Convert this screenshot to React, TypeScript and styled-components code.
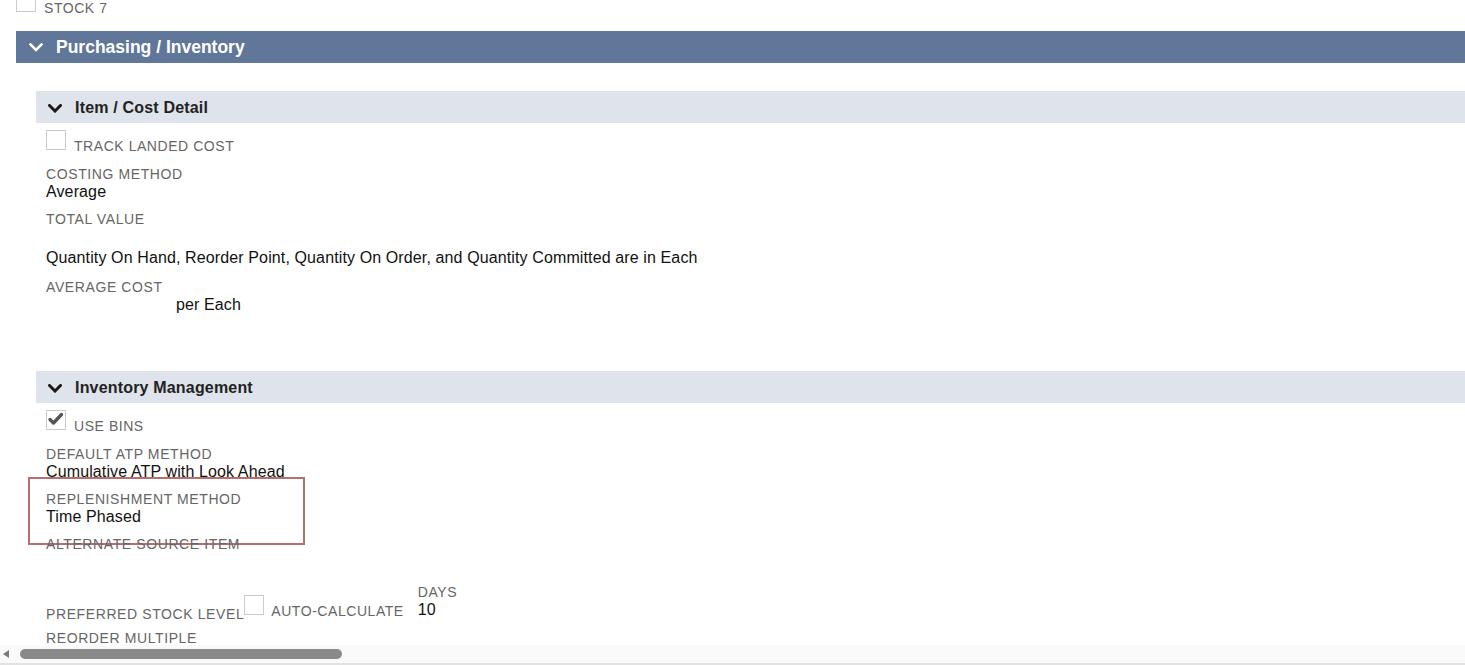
import React from 'react';
import styled, { createGlobalStyle } from 'styled-components';

const GlobalStyle = createGlobalStyle`
  html, body {
    margin: 0;
    padding: 0;
    background: #ffffff;
    overflow: hidden;
  }
  body {
    font-family: "Liberation Sans", Arial, sans-serif;
  }
`;

const Page = styled.div`
  padding-left: 16px;
  margin-top: -8px;
`;

const CheckRow = styled.div<{ $gap?: number }>`
  display: flex;
  align-items: flex-end;
  gap: ${p => p.$gap ?? 8}px;
`;

const Box = styled.div`
  width: 20px;
  height: 20px;
  box-sizing: border-box;
  border: 1px solid #cbcbcb;
  background: #fff;
  display: flex;
  align-items: center;
  justify-content: center;
  flex-shrink: 0;
`;

const CheckText = styled.span`
  font-size: 14px;
  line-height: 14px;
  letter-spacing: 0.55px;
  color: #666;
  margin-bottom: -3px;
  white-space: nowrap;
`;

const MainHeader = styled.div`
  display: flex;
  align-items: center;
  gap: 13px;
  height: 32px;
  margin-top: 19px;
  padding-left: 13px;
  background: #607799;
  color: #ffffff;
  font-size: 17.5px;
  font-weight: bold;
`;

const Section = styled.div`
  padding-left: 20px;
  padding-bottom: 19px;
  margin-top: 28px;
`;

const SubHeader = styled.div`
  display: flex;
  align-items: center;
  gap: 13px;
  height: 32px;
  box-sizing: border-box;
  padding: 2px 0 0 12px;
  background: #dfe3eb;
  color: #222;
  font-size: 16px;
  font-weight: bold;
  letter-spacing: 0.18px;
`;

const SectionBody = styled.div`
  padding: 7px 0 0 10px;
`;

const Fields = styled.div`
  margin-top: 16px;
`;

const Field = styled.div<{ $gap?: number }>`
  position: relative;
  margin-bottom: ${p => p.$gap ?? 10}px;
`;

const Label = styled.div`
  font-size: 14px;
  line-height: 17px;
  letter-spacing: 0.6px;
  color: #666;
  white-space: nowrap;
`;

const Value = styled.div<{ $indent?: number; $empty?: boolean }>`
  font-size: 16px;
  line-height: 18px;
  letter-spacing: 0.12px;
  color: #111;
  padding-left: ${p => p.$indent ?? 0}px;
  height: ${p => (p.$empty ? '11px' : 'auto')};
  white-space: nowrap;
`;

const Note = styled.div`
  font-size: 16px;
  line-height: 18px;
  letter-spacing: 0.12px;
  color: #111;
  margin-bottom: 12px;
`;

const Highlight = styled.div`
  position: absolute;
  top: -14px;
  left: -18px;
  width: 277px;
  height: 68px;
  box-sizing: border-box;
  border: 2px solid #b66f6f;
  pointer-events: none;
`;

const InlineRow = styled.div`
  display: flex;
  align-items: flex-end;
  margin-top: 20px;
  margin-bottom: 7px;
`;

const InlineCheck = styled(CheckRow)`
  margin-bottom: 8px;
`;

const DaysField = styled.div`
  margin-left: 14px;
  margin-bottom: 4px;
`;

const HScroll = styled.div`
  position: fixed;
  left: 0;
  right: 0;
  bottom: 0;
  height: 20px;
  box-sizing: border-box;
  background: #fafafa;
  border-bottom: 2px solid #e2e2e2;
  display: flex;
  align-items: center;
`;

const ScrollArrow = styled.div`
  width: 0;
  height: 0;
  margin-left: 3px;
  border-top: 4.5px solid transparent;
  border-bottom: 4.5px solid transparent;
  border-right: 6px solid #7a7a7a;
`;

const ScrollThumb = styled.div`
  margin-left: 11px;
  width: 322px;
  height: 10px;
  border-radius: 5px;
  background: #8a8a8a;
`;

const Chevron = ({ color, weight }: { color: string; weight: number }) => (
  <svg width="14" height="9" viewBox="0 0 14 9">
    <polyline
      points="1.5,1.5 7,7 12.5,1.5"
      fill="none"
      stroke={color}
      strokeWidth={weight}
      strokeLinecap="square"
    />
  </svg>
);

const Tick = () => (
  <svg width="18" height="18" viewBox="0 0 18 18">
    <polyline
      points="3,8.5 6.5,12 14.5,3.5"
      fill="none"
      stroke="#555"
      strokeWidth="3.4"
      strokeLinecap="round"
      strokeLinejoin="round"
    />
  </svg>
);

const Checkbox = ({ checked }: { checked?: boolean }) => <Box>{checked && <Tick />}</Box>;

export default function App() {
  return (
    <>
      <GlobalStyle />
      <Page>
        <CheckRow>
          <Checkbox />
          <CheckText>STOCK 7</CheckText>
        </CheckRow>

        <MainHeader>
          <Chevron color="#ffffff" weight={2.5} />
          Purchasing / Inventory
        </MainHeader>

        <Section>
          <SubHeader>
            <Chevron color="#1a1a1a" weight={3} />
            Item / Cost Detail
          </SubHeader>
          <SectionBody>
            <CheckRow>
              <Checkbox />
              <CheckText>TRACK LANDED COST</CheckText>
            </CheckRow>
            <Fields>
              <Field>
                <Label>COSTING METHOD</Label>
                <Value>Average</Value>
              </Field>
              <Field>
                <Label>TOTAL VALUE</Label>
                <Value $empty />
              </Field>
              <Note>
                Quantity On Hand, Reorder Point, Quantity On Order, and Quantity Committed are in Each
              </Note>
              <Field>
                <Label>AVERAGE COST</Label>
                <Value $indent={130}>per Each</Value>
              </Field>
            </Fields>
          </SectionBody>
        </Section>

        <Section>
          <SubHeader>
            <Chevron color="#1a1a1a" weight={3} />
            Inventory Management
          </SubHeader>
          <SectionBody>
            <CheckRow>
              <Checkbox checked />
              <CheckText>USE BINS</CheckText>
            </CheckRow>
            <Fields>
              <Field>
                <Label>DEFAULT ATP METHOD</Label>
                <Value>Cumulative ATP with Look Ahead</Value>
              </Field>
              <Field>
                <Label>REPLENISHMENT METHOD</Label>
                <Value>Time Phased</Value>
                <Highlight />
              </Field>
              <Field>
                <Label>ALTERNATE SOURCE ITEM</Label>
                <Value $empty />
              </Field>
              <InlineRow>
                <Label>PREFERRED STOCK LEVEL</Label>
                <InlineCheck $gap={7}>
                  <Checkbox />
                  <CheckText>AUTO-CALCULATE</CheckText>
                </InlineCheck>
                <DaysField>
                  <Label>DAYS</Label>
                  <Value>10</Value>
                </DaysField>
              </InlineRow>
              <Field>
                <Label>REORDER MULTIPLE</Label>
                <Value $empty />
              </Field>
            </Fields>
          </SectionBody>
        </Section>
      </Page>

      <HScroll>
        <ScrollArrow />
        <ScrollThumb />
      </HScroll>
    </>
  );
}
